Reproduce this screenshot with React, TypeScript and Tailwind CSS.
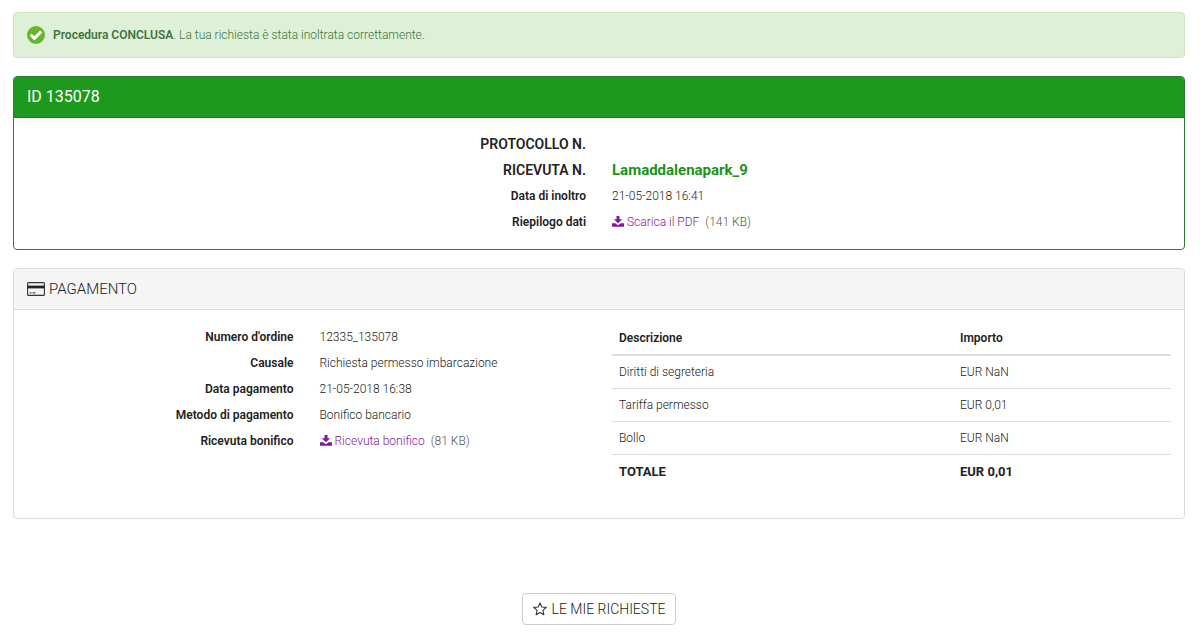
import type { ReactNode } from 'react';

function DownloadIcon() {
  return (
    <svg viewBox="0 0 12 12" className="h-3 w-3 shrink-0" fill="currentColor" aria-hidden="true">
      <path d="M4.5 0h3v3.2h2.7L6 7.2 1.8 3.2h2.7z" />
      <path d="M0 7.3h3.2L6 9.2l2.8-1.9H12v3.5H0z" />
    </svg>
  );
}

function CardIcon() {
  return (
    <svg viewBox="0 0 18 14" className="h-[14px] w-[18px] shrink-0" fill="none" aria-hidden="true">
      <rect x="0.6" y="0.6" width="16.8" height="12.8" rx="1" stroke="#333" strokeWidth="1.1" />
      <path d="M0.6 5h16.8" stroke="#222" strokeWidth="2.8" />
      <path d="M2.5 10.9h2M5.5 10.9h3" stroke="#333" strokeWidth="1" />
    </svg>
  );
}

function StarIcon() {
  return (
    <svg viewBox="0 0 14 14" className="h-[14px] w-[14px] shrink-0" fill="none" aria-hidden="true">
      <path
        d="M7 0.9l1.8 4.1 4.5.4-3.4 3 1 4.4L7 10.5l-3.9 2.3 1-4.4-3.4-3 4.5-.4z"
        stroke="#333"
        strokeWidth="1.1"
        strokeLinejoin="round"
      />
    </svg>
  );
}

function CheckIcon() {
  return (
    <svg viewBox="0 0 18 18" className="h-[18px] w-[18px] shrink-0" aria-hidden="true">
      <circle cx="9" cy="9" r="9" fill="#69b42e" />
      <path d="M3.7 8.6l3.7 3.7 6.8-6.8" fill="none" stroke="#fff" strokeWidth="3" />
    </svg>
  );
}

function Download({ label, size }: { label: string; size: string }) {
  return (
    <span className="inline-flex items-center">
      <a href="#" className="inline-flex items-center gap-[3px] text-[#7b1c99]">
        <DownloadIcon />
        {label}
      </a>
      <span className="ml-[6px] text-[#555]">{size}</span>
    </span>
  );
}

type Field = { label: string; value: ReactNode; large?: boolean };

const receipt: Field[] = [
  { label: 'PROTOCOLLO N.', value: '', large: true },
  { label: 'RICEVUTA N.', value: 'Lamaddalenapark_9', large: true },
  { label: 'Data di inoltro', value: '21-05-2018 16:41' },
  { label: 'Riepilogo dati', value: <Download label="Scarica il PDF" size="(141 KB)" /> },
];

const payment: Field[] = [
  { label: "Numero d'ordine", value: '12335_135078' },
  { label: 'Causale', value: 'Richiesta permesso imbarcazione' },
  { label: 'Data pagamento', value: '21-05-2018 16:38' },
  { label: 'Metodo di pagamento', value: 'Bonifico bancario' },
  { label: 'Ricevuta bonifico', value: <Download label="Ricevuta bonifico" size="(81 KB)" /> },
];

const items = [
  ['Diritti di segreteria', 'EUR NaN'],
  ['Tariffa permesso', 'EUR 0,01'],
  ['Bollo', 'EUR NaN'],
];

function Fields({ fields }: { fields: Field[] }) {
  return (
    <dl>
      {fields.map((f) => (
        <div key={f.label} className="grid grid-cols-2">
          <dt
            className={
              f.large
                ? 'pr-[13px] text-right text-sm/[26px] font-semibold'
                : 'pr-[13px] text-right text-xs/[26px] font-semibold'
            }
          >
            {f.label}
          </dt>
          <dd
            className={
              f.large
                ? 'pl-[13px] text-[15px]/[26px] font-bold text-[#1a931a]'
                : 'pl-[13px] text-xs/[26px] font-light'
            }
          >
            {f.value}
          </dd>
        </div>
      ))}
    </dl>
  );
}

export default function App() {
  return (
    <main className="bg-white pt-3 pr-[15px] pb-3 pl-[13px] font-['Roboto',sans-serif] text-xs text-[#222]">
      <div
        role="status"
        className="flex items-center gap-2 rounded border border-[#d0e6bf] bg-[#dff0d8] px-[13px] py-[13px] text-[#3c763d]"
      >
        <CheckIcon />
        <p className="leading-[18px] font-light">
          <strong className="font-semibold">Procedura CONCLUSA</strong>. La tua richiesta è stata inoltrata correttamente.
        </p>
      </div>

      <section className="mt-[18px] rounded border border-[#2f7a38]">
        <h2 className="rounded-t-[3px] border-b border-[#1b7a22] bg-[#1d9a1d] px-[13px] text-base/10 text-white">
          ID 135078
        </h2>
        <div className="pt-[13px] pb-3">
          <Fields fields={receipt} />
        </div>
      </section>

      <section className="mt-[18px] rounded border border-[#ddd]">
        <h2 className="flex items-center gap-1 rounded-t-[3px] border-b border-[#ddd] bg-[#f5f5f5] px-[13px] text-[15px]/10 font-light">
          <CardIcon />
          PAGAMENTO
        </h2>
        <div className="grid grid-cols-2 pb-[30px]">
          <div className="pt-[14px]">
            <Fields fields={payment} />
          </div>
          <div className="px-[13px] pt-3">
            <table className="w-full border-collapse text-left">
              <thead>
                <tr className="h-[33px] border-b-2 border-[#ddd]">
                  <th className="w-[61%] px-[7px] font-semibold">Descrizione</th>
                  <th className="px-[7px] font-semibold">Importo</th>
                </tr>
              </thead>
              <tbody className="font-light">
                {items.map(([name, price]) => (
                  <tr key={name} className="h-[33px] border-b border-[#ddd]">
                    <td className="px-[7px]">{name}</td>
                    <td className="px-[7px]">{price}</td>
                  </tr>
                ))}
              </tbody>
              <tfoot>
                <tr className="h-[34px] text-[13px]">
                  <th className="px-[7px] font-bold">TOTALE</th>
                  <td className="px-[7px] font-bold">EUR 0,01</td>
                </tr>
              </tfoot>
            </table>
          </div>
        </div>
      </section>

      <div className="mt-[74px] flex justify-center">
        <button
          type="button"
          className="flex h-8 items-center gap-[5px] rounded border border-[#ccc] bg-white px-[10px] text-sm font-light text-[#222]"
        >
          <StarIcon />
          LE MIE RICHIESTE
        </button>
      </div>
    </main>
  );
}
